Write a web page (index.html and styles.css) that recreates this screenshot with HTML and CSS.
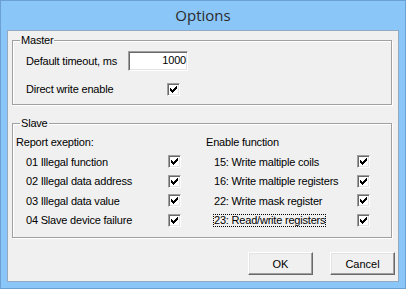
FILE: index.html
```html
<!DOCTYPE html>
<html lang="en">
<head>
    <meta charset="UTF-8">
    <title>Options</title>
    <link rel="stylesheet" href="styles.css">
</head>
<body>
    <div class="window">
        <div class="titlebar">Options</div>
        <div class="client">
            <div class="group master">
                <div class="group-title">Master</div>
                <div class="master-row first">
                    <span class="master-label">Default timeout, ms</span>
                    <div class="edit">1000</div>
                </div>
                <div class="master-row second">
                    <span class="master-label">Direct write enable</span>
                    <span class="check push"><svg width="7" height="7" viewBox="0 0 7 7" shape-rendering="crispEdges"><path d="M0 2h1v3H0zM1 3h1v3H1zM2 4h1v3H2zM3 3h1v3H3zM4 2h1v3H4zM5 1h1v3H5zM6 0h1v3H6z"/></svg></span>
                </div>
            </div>

            <div class="group slave">
                <div class="group-title">Slave</div>
                <div class="slave-cols">
                    <div class="col col-left">
                        <div class="col-head">Report exeption:</div>
                        <div class="item"><span class="item-label">01 Illegal function</span><span class="check"><svg width="7" height="7" viewBox="0 0 7 7" shape-rendering="crispEdges"><path d="M0 2h1v3H0zM1 3h1v3H1zM2 4h1v3H2zM3 3h1v3H3zM4 2h1v3H4zM5 1h1v3H5zM6 0h1v3H6z"/></svg></span></div>
                        <div class="item"><span class="item-label">02 Illegal data address</span><span class="check"><svg width="7" height="7" viewBox="0 0 7 7" shape-rendering="crispEdges"><path d="M0 2h1v3H0zM1 3h1v3H1zM2 4h1v3H2zM3 3h1v3H3zM4 2h1v3H4zM5 1h1v3H5zM6 0h1v3H6z"/></svg></span></div>
                        <div class="item"><span class="item-label">03 Illegal data value</span><span class="check"><svg width="7" height="7" viewBox="0 0 7 7" shape-rendering="crispEdges"><path d="M0 2h1v3H0zM1 3h1v3H1zM2 4h1v3H2zM3 3h1v3H3zM4 2h1v3H4zM5 1h1v3H5zM6 0h1v3H6z"/></svg></span></div>
                        <div class="item"><span class="item-label">04 Slave device failure</span><span class="check"><svg width="7" height="7" viewBox="0 0 7 7" shape-rendering="crispEdges"><path d="M0 2h1v3H0zM1 3h1v3H1zM2 4h1v3H2zM3 3h1v3H3zM4 2h1v3H4zM5 1h1v3H5zM6 0h1v3H6z"/></svg></span></div>
                    </div>
                    <div class="col col-right">
                        <div class="col-head">Enable function</div>
                        <div class="item"><span class="item-label">15: Write maltiple coils</span><span class="check"><svg width="7" height="7" viewBox="0 0 7 7" shape-rendering="crispEdges"><path d="M0 2h1v3H0zM1 3h1v3H1zM2 4h1v3H2zM3 3h1v3H3zM4 2h1v3H4zM5 1h1v3H5zM6 0h1v3H6z"/></svg></span></div>
                        <div class="item"><span class="item-label">16: Write maltiple registers</span><span class="check"><svg width="7" height="7" viewBox="0 0 7 7" shape-rendering="crispEdges"><path d="M0 2h1v3H0zM1 3h1v3H1zM2 4h1v3H2zM3 3h1v3H3zM4 2h1v3H4zM5 1h1v3H5zM6 0h1v3H6z"/></svg></span></div>
                        <div class="item"><span class="item-label">22: Write mask register</span><span class="check"><svg width="7" height="7" viewBox="0 0 7 7" shape-rendering="crispEdges"><path d="M0 2h1v3H0zM1 3h1v3H1zM2 4h1v3H2zM3 3h1v3H3zM4 2h1v3H4zM5 1h1v3H5zM6 0h1v3H6z"/></svg></span></div>
                        <div class="item"><span class="item-label"><span class="focused">23: Read/write registers</span></span><span class="check"><svg width="7" height="7" viewBox="0 0 7 7" shape-rendering="crispEdges"><path d="M0 2h1v3H0zM1 3h1v3H1zM2 4h1v3H2zM3 3h1v3H3zM4 2h1v3H4zM5 1h1v3H5zM6 0h1v3H6z"/></svg></span></div>
                    </div>
                </div>
            </div>

            <div class="buttons">
                <button class="btn">OK</button>
                <button class="btn">Cancel</button>
            </div>
        </div>
    </div>
</body>
</html>
```

FILE: styles.css
```css
:root {
    --frame-color: #8ac6f8;
    --frame-edge: #6c9fd2;
    --client-edge: #93a9c0;
    --face-color: #f0f0f0;
    --shadow-color: #a0a0a0;
    --dark-shadow: #696969;
    --light-color: #e3e3e3;
}
* {
    margin: 0;
    padding: 0;
    box-sizing: border-box;
}
body {
    width: 406px;
    height: 289px;
    font-family: 'Liberation Sans', Arial, sans-serif;
    font-size: 11px;
    letter-spacing: -0.2px;
    color: #000;
}
.window {
    height: 289px;
    display: flex;
    flex-direction: column;
    border: 1px solid var(--frame-edge);
    background: var(--frame-color);
    padding: 0 6px 6px 6px;
}
.titlebar {
    height: 29px;
    line-height: 29px;
    text-align: center;
    font-family: 'Open Sans', sans-serif;
    font-size: 15px;
    letter-spacing: 0;
    color: #2b2b2b;
}
.client {
    flex: 1;
    display: flex;
    flex-direction: column;
    border: 1px solid var(--client-edge);
    background: var(--face-color);
    padding: 9px 6px 0 4px;
}

/* etched group boxes */
.group {
    border: 1px solid var(--shadow-color);
    box-shadow: 1px 1px 0 #fff, inset 1px 1px 0 #fff;
}
.group-title {
    width: fit-content;
    margin: -7px 0 0 7px;
    padding: 0 1px;
    line-height: 13px;
    background: var(--face-color);
}
.master {
    height: 65px;
}
.slave {
    height: 115px;
    margin-top: 18px;
}

.master-row {
    display: flex;
    align-items: center;
    height: 20px;
    padding-left: 13px;
}
.master-row.first {
    margin-top: 4px;
}
.master-row.second {
    margin-top: 8px;
}
.master-label {
    width: 102px;
}
.edit {
    width: 60px;
    height: 20px;
    line-height: 16px;
    padding-right: 1px;
    text-align: right;
    background: #fff;
    border: 1px solid;
    border-color: var(--shadow-color) #fff #fff var(--shadow-color);
    box-shadow: inset 1px 1px 0 var(--dark-shadow), inset -1px -1px 0 var(--light-color);
}

.check {
    width: 13px;
    height: 13px;
    display: flex;
    align-items: center;
    justify-content: center;
    flex-shrink: 0;
    background: #fff;
    border: 1px solid;
    border-color: var(--shadow-color) #fff #fff var(--shadow-color);
    box-shadow: inset 1px 1px 0 var(--dark-shadow), inset -1px -1px 0 var(--light-color);
}
.check svg {
    display: block;
    fill: #000;
}
.check.push {
    margin-left: 39px;
}

.slave-cols {
    display: grid;
    grid-template-columns: 190px 1fr;
    margin-top: 3px;
    padding-left: 3px;
}
.col-head {
    line-height: 19px;
}
.item {
    display: flex;
    align-items: center;
    height: 19.5px;
    padding-left: 10px;
}
.item-label {
    width: 142px;
}
.col-right .item {
    padding-left: 8px;
}
.col-right .item-label {
    width: 143px;
}
.focused {
    display: inline-block;
    margin-left: -1px;
    line-height: 11px;
    border: 1px dotted #000;
}

.buttons {
    display: flex;
    justify-content: flex-end;
    gap: 17px;
    margin-top: 14px;
    margin-right: -3px;
}
.btn {
    width: 65px;
    height: 23px;
    font: inherit;
    color: #000;
    background: var(--face-color);
    border: 1px solid;
    border-color: #fff var(--dark-shadow) var(--dark-shadow) #fff;
    box-shadow: inset -1px -1px 0 var(--shadow-color), inset 1px 1px 0 var(--light-color);
}
```
